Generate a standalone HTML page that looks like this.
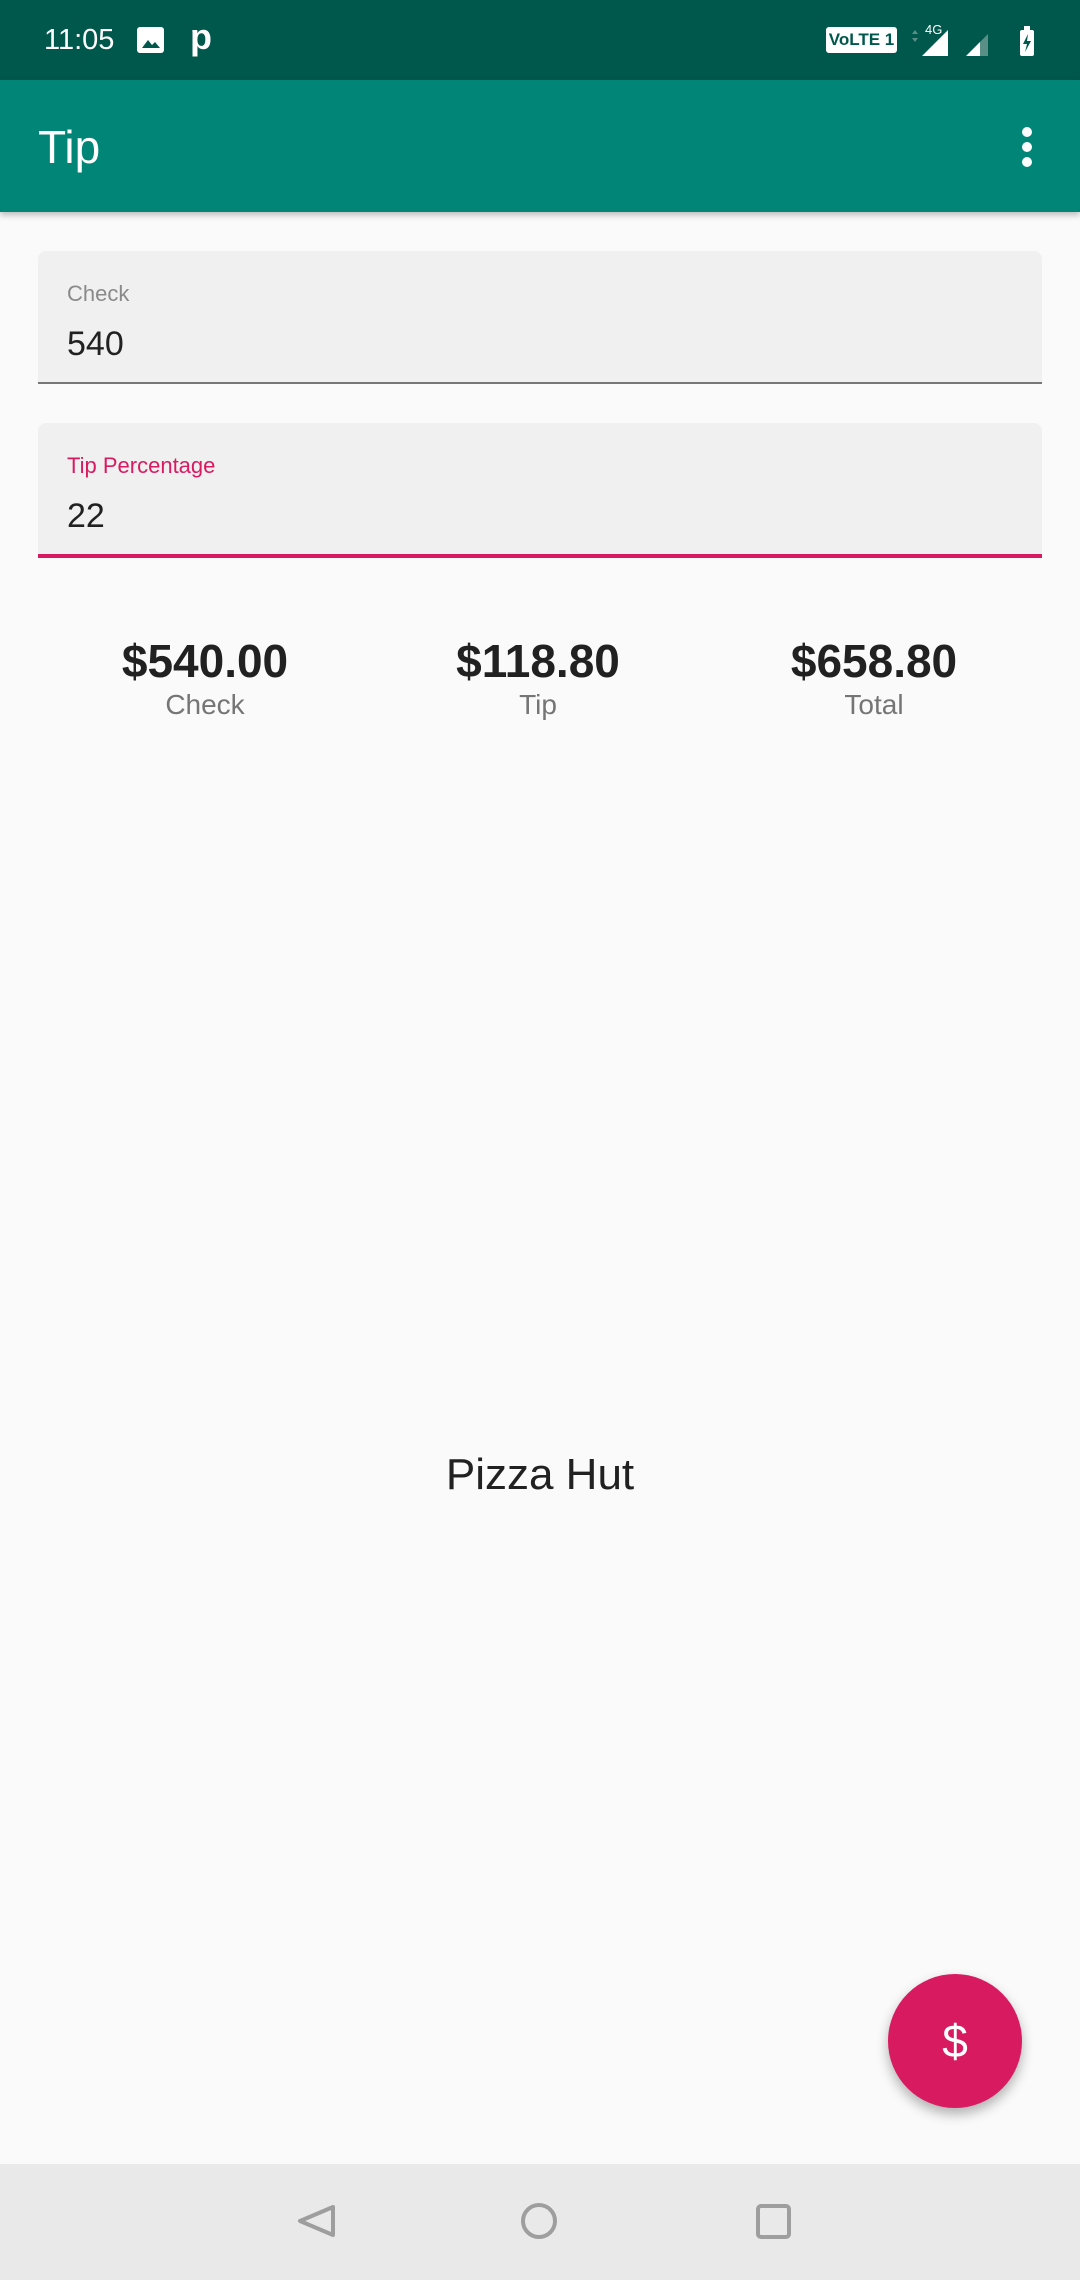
<!DOCTYPE html>
<html><head><meta charset="utf-8"><style>
*{margin:0;padding:0;box-sizing:border-box}
body{width:1080px;height:2280px;background:#fafafa;font-family:"Liberation Sans",sans-serif;position:relative;overflow:hidden}
.abs{position:absolute}
.sb{left:0;top:0;width:1080px;height:80px;background:#00574b;color:#fff}
.ab{left:0;top:80px;width:1080px;height:132px;background:#008577;box-shadow:0 3px 6px rgba(0,0,0,.25)}
.field{left:38px;width:1004px;background:#f0f0f0;border-radius:8px 8px 0 0}
.lbl{font-size:22px;color:#8a8a8a;left:29px}
.val{font-size:34px;color:#212121;left:29px}
.big{font-size:46px;font-weight:bold;color:#212121;width:360px;text-align:center;margin-left:-180px}
.sm{font-size:28px;color:#757575;width:360px;text-align:center;margin-left:-180px}
</style></head><body>
<div class="abs sb">
  <div class="abs" style="left:44px;top:24px;font-size:29px">11:05</div>
  <div class="abs" style="left:137px;top:27px;width:27px;height:26px;background:#fff;border-radius:3px"></div>
  <svg class="abs" style="left:140px;top:35px" width="22" height="15"><path d="M2 13 L8 5 L12 10 L15 7 L20 13Z" fill="#00574b"/></svg>
  <div class="abs" style="left:190px;top:16px;font-size:36px;font-weight:bold">p</div>
  <div class="abs" style="left:826px;top:27px;width:71px;height:26px;background:#fff;border-radius:3px;color:#00574b;font-size:17px;font-weight:bold;text-align:center;line-height:26px">VoLTE 1</div>
  <svg class="abs" style="left:900px;top:22px" width="150" height="36">
    <path d="M12 12 L15 8 L18 12Z M12 16 L15 20 L18 16Z" fill="#5a8f87"/>
    <text x="25" y="12" font-size="13" fill="#fff" font-family="Liberation Sans">4G</text>
    <path d="M22 34 L48 8 L48 34Z" fill="#fff"/>
    <path d="M66 34 L88 12 L88 34Z" fill="#5a8f87"/><path d="M66 34 L80 20 L80 34Z" fill="#fff"/>
    <rect x="120" y="8" width="14" height="26" rx="2" fill="#fff"/>
    <rect x="124" y="4" width="6" height="5" fill="#fff"/>
    <path d="M128 12 L123 22 L127 22 L125 30 L131 19 L127 19Z" fill="#00574b"/>
  </svg>
</div>
<div class="abs ab">
  <div class="abs" style="left:38px;top:40px;font-size:46px;color:#fff">Tip</div>
  <div class="abs" style="left:1022px;top:47px;width:10px;height:10px;border-radius:5px;background:#fff;box-shadow:0 15px 0 #fff,0 30px 0 #fff"></div>
</div>
<div class="abs field" style="top:251px;height:133px;border-bottom:2px solid #777">
  <div class="abs lbl" style="top:30px">Check</div>
  <div class="abs val" style="top:74px">540</div>
</div>
<div class="abs field" style="top:423px;height:135px;border-bottom:4px solid #d81b60">
  <div class="abs lbl" style="top:30px;color:#d81b60">Tip Percentage</div>
  <div class="abs val" style="top:74px">22</div>
</div>
<div class="abs big" style="left:205px;top:634px">$540.00</div>
<div class="abs big" style="left:538px;top:634px">$118.80</div>
<div class="abs big" style="left:874px;top:634px">$658.80</div>
<div class="abs sm" style="left:205px;top:689px">Check</div>
<div class="abs sm" style="left:538px;top:689px">Tip</div>
<div class="abs sm" style="left:874px;top:689px">Total</div>
<div class="abs" style="left:0;width:1080px;text-align:center;top:1450px;font-size:44px;color:#212121">Pizza Hut</div>
<div class="abs" style="left:888px;top:1974px;width:134px;height:134px;border-radius:67px;background:#d81b60;box-shadow:0 6px 12px rgba(0,0,0,.3);color:#fff;font-size:46px;text-align:center;line-height:134px">$</div>
<div class="abs" style="left:0;top:2164px;width:1080px;height:116px;background:#e9e9e9">
  <svg class="abs" style="left:0;top:0" width="1080" height="116">
    <path d="M333 43 L300 57 L333 71Z" fill="none" stroke="#9e9e9e" stroke-width="4" stroke-linejoin="round"/>
    <circle cx="539" cy="57" r="16" fill="none" stroke="#9e9e9e" stroke-width="4"/>
    <rect x="758" y="42" width="31" height="31" rx="3" fill="none" stroke="#9e9e9e" stroke-width="4"/>
  </svg>
</div>
</body></html>
